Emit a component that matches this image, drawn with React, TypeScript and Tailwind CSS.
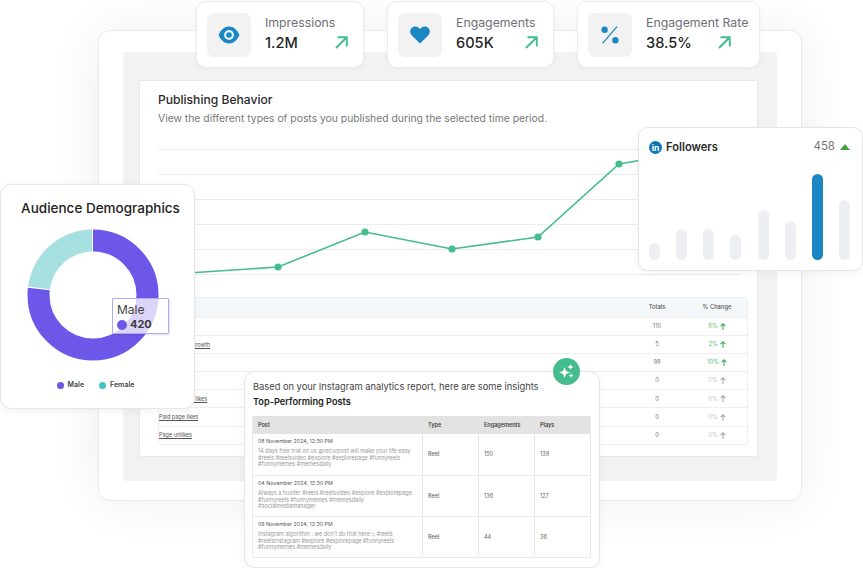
const font = "font-['Inter','Noto_Sans',sans-serif]";

const rows = [
  { name: "Page likes", total: "110", change: "8%", up: true },
  { name: "Net follower growth", total: "5", change: "2%", up: true },
  { name: "Page views", total: "98", change: "10%", up: true },
  { name: "Page reach", total: "0", change: "0%", up: false },
  { name: "Organic page likes", total: "0", change: "0%", up: false },
  { name: "Paid page likes", total: "0", change: "0%", up: false },
  { name: "Page unlikes", total: "0", change: "0%", up: false },
];

const posts = [
  {
    date: "08 November 2024, 12:30 PM",
    text: "14 days free trial on us @recurpost will make your life easy #reels #reelsvideo #explore #explorepage #funnyreels #funnymemes #memesdaily",
    eng: "150",
    plays: "139",
  },
  {
    date: "04 November 2024, 12:30 PM",
    text: "Always a hustler #reels #reelsvideo #explore #explorepage #funnyreels #funnymemes #memesdaily #socialmediamanager",
    eng: "136",
    plays: "127",
  },
  {
    date: "09 November 2024, 12:30 PM",
    text: "Instagram algorithm : we don't do that here :) #reels #reelsinstagram #explore #explorepage #funnyreels #funnymemes #memesdaily",
    eng: "44",
    plays: "36",
  },
];

const bars = [17, 31, 31, 25, 50, 39, 86, 60];

const TrendArrow = () => (
  <svg width="13" height="13" viewBox="0 0 13 13" fill="none" stroke="#43bd8c" strokeWidth="1.9">
    <path d="M1 12 L11.5 1.5 M2.5 1.3 H11.8 V10.5" />
  </svg>
);

const SmallUp = ({ color }: { color: string }) => (
  <svg width="6" height="7" viewBox="0 0 6 7" fill="none" stroke={color} strokeWidth="1.1">
    <path d="M3 7 V1 M.6 3.2 L3 .8 L5.4 3.2" />
  </svg>
);

const EyeIcon = () => (
  <svg width="22" height="18" viewBox="0 0 22 18">
    <path d="M.5 9 C3 3.5 6.5 .5 11 .5 C15.5 .5 19 3.5 21.5 9 C19 14.5 15.5 17.5 11 17.5 C6.5 17.5 3 14.5 .5 9 Z" fill="#1a87c2" />
    <circle cx="11" cy="9" r="4.9" fill="#e6f2f8" />
    <circle cx="11" cy="9" r="2.8" fill="#1a87c2" />
  </svg>
);

const HeartIcon = () => (
  <svg width="20" height="18" viewBox="0 0 20 18">
    <path
      d="M10 17.5 L1.8 9.4 C-.4 7.2 -.3 3.6 1.9 1.7 C4.1 -.2 7.6 .2 10 3 C12.4 .2 15.9 -.2 18.1 1.7 C20.3 3.6 20.4 7.2 18.2 9.4 Z"
      fill="#1a87c2"
    />
  </svg>
);

const PercentIcon = () => (
  <svg width="18" height="18" viewBox="0 0 18 18" fill="#1a87c2">
    <circle cx="3.6" cy="3.8" r="3.2" />
    <circle cx="14.4" cy="14.2" r="3.2" />
    <path d="M16 .6 L1.6 17.4" stroke="#1a87c2" strokeWidth="1.3" />
  </svg>
);

const StatCard = ({
  label,
  value,
  icon,
  width,
  arrowGap,
}: {
  label: string;
  value: string;
  icon: React.ReactNode;
  width: string;
  arrowGap: string;
}) => (
  <div className={`${width} h-[67px] bg-white rounded-[10px] border border-[#ececec] flex items-center pl-[10px] gap-[14px] shadow-[0_1px_4px_rgba(0,0,0,0.04)]`}>
    <div className="w-[44px] h-[44px] rounded-[7px] bg-[#f2f2f2] flex items-center justify-center">{icon}</div>
    <div className="flex flex-col gap-[2px] mb-[2px]">
      <span className="text-[12.3px] leading-[16px] text-[#6e6e78]">{label}</span>
      <div className={`flex items-center ${arrowGap}`}>
        <span className="text-[14.6px] leading-[20px] font-medium text-[#262626]">{value}</span>
        <TrendArrow />
      </div>
    </div>
  </div>
);

const PublishingPanel = () => (
  <div className="h-[377px] bg-white border border-[#e9e9e9] rounded-[2px] pl-[18px] pr-[10px] pt-[11px] flex flex-col">
    <h2 className="text-[12.1px] leading-[16px] font-medium text-[#2a2a2a]">Publishing Behavior</h2>
    <p className="mt-[2px] text-[10.35px] leading-[16px] text-[#777]">
      View the different types of posts you published during the selected time period.
    </p>
    <svg className="mt-[23px] shrink-0" width="590" height="126" viewBox="0 0 590 126" fill="none">
      {[0, 25, 50, 75, 100, 125].map((y) => (
        <line key={y} x1="0" x2="583" y1={y + 0.5} y2={y + 0.5} stroke="#ececec" />
      ))}
      <polyline
        points="30,124 120,118 207,83 294,100 380,88 461,15 520,5"
        stroke="#43bd8c"
        strokeWidth="1.6"
      />
      {[[120, 118], [207, 83], [294, 100], [380, 88], [461, 15]].map(([cx, cy]) => (
        <circle key={cx} cx={cx} cy={cy} r="3.6" fill="#43bd8c" />
      ))}
    </svg>
    <div className="mt-[22px] w-[590px] border border-[#efefef] rounded-[3px] overflow-hidden">
      <div className="h-[19px] bg-[#f5f8fb] flex items-center text-[5.8px] font-medium text-[#555]">
        <span className="flex-1" />
        <span className="w-[60px] text-center">Totals</span>
        <span className="w-[60px] text-center">% Change</span>
      </div>
      {rows.map((row) => (
        <div key={row.name} className="h-[18.1px] border-t border-[#efefef] flex items-center text-[5.8px] text-[#777]">
          <span className="flex-1 underline text-[5.5px] text-[#555]">{row.name}</span>
          <span className="w-[60px] text-center">{row.total}</span>
          <span className={`w-[60px] flex items-center justify-center gap-[2px] ${row.up ? "text-[#54c66b]" : "text-[#c4c4c4]"}`}>
            {row.change}
            <SmallUp color={row.up ? "#3fae5a" : "#aaa"} />
          </span>
        </div>
      ))}
    </div>
  </div>
);

const FollowersCard = () => (
  <div className="absolute left-[638px] top-[127px] w-[225px] h-[144px] bg-white border border-[#e6e6e6] rounded-[10px] px-[10px] pt-[11px] flex flex-col shadow-[0_2px_8px_rgba(0,0,0,0.05)]">
    <div className="flex items-center h-[16px]">
      <svg width="13" height="13" viewBox="0 0 13 13">
        <circle cx="6.5" cy="6.5" r="6.5" fill="#0f76b5" />
        <text x="6.5" y="9.8" textAnchor="middle" fontSize="8.5" fontWeight="700" fill="#fff">in</text>
      </svg>
      <span className="ml-[4px] text-[11.2px] font-semibold text-[#2a2a2a]">Followers</span>
      <span className="ml-auto text-[11.5px] text-[#777]">458</span>
      <span className="ml-[5px] mr-[2px] w-0 h-0 border-x-[5px] border-x-transparent border-b-[6px] border-b-[#43a047]" />
    </div>
    <div className="mt-[19px] h-[86px] flex items-end justify-between pr-[2px]">
      {bars.map((h, i) => (
        <div
          key={i}
          className={`w-[11px] rounded-full ${i === 6 ? "bg-[#1a87c2]" : "bg-[#eeeff2]"}`}
          style={{ height: h }}
        />
      ))}
    </div>
  </div>
);

const DemographicsCard = () => (
  <div className="absolute left-0 top-[184px] w-[195px] h-[225px] bg-white border border-[#e6e6e6] rounded-[11px] flex flex-col items-center shadow-[0_2px_8px_rgba(0,0,0,0.05)]">
    <h3 className="mt-[13px] ml-[6px] text-[13.5px] leading-[20px] font-medium text-[#222]">Audience Demographics</h3>
    <svg className="mt-[10px] mr-[9px]" width="134" height="134" viewBox="0 0 134 134" fill="none">
      <circle cx="67" cy="67" r="54.5" stroke="#6c57e8" strokeWidth="22" pathLength="360" strokeDasharray="276.5 83.5" transform="rotate(-90 67 67)" />
      <circle cx="67" cy="67" r="54.5" stroke="#a6e0e0" strokeWidth="22" pathLength="360" strokeDasharray="81.5 278.5" transform="rotate(187.5 67 67)" />
    </svg>
    <div className="mt-[18px] mr-[4px] flex items-center gap-[15px] text-[7px] font-semibold text-[#444]">
      <span className="flex items-center gap-[4px]">
        <span className="w-[7px] h-[7px] rounded-full bg-[#6c57e8]" />
        Male
      </span>
      <span className="flex items-center gap-[4px]">
        <span className="w-[7px] h-[7px] rounded-full bg-[#3fc4c0]" />
        Female
      </span>
    </div>
    <div className="absolute left-[111px] top-[113px] w-[57px] h-[36px] bg-white/75 border border-[#b3a8f2] rounded-[1px] pl-[4px] pt-[3px] shadow-[1px_1px_2px_rgba(0,0,0,0.12)]">
      <div className="text-[12px] leading-[15px] text-[#444]">Male</div>
      <div className="flex items-center gap-[3px] text-[11px] leading-[15px] font-bold text-[#3a3a3a]">
        <span className="w-[10px] h-[10px] rounded-full bg-[#6c57e8]" />
        420
      </div>
    </div>
  </div>
);

const InsightsCard = () => (
  <div className="absolute left-[244px] top-[371px] w-[356px] h-[197px] bg-white border border-[#e6e6e6] rounded-[11px] pl-[8px] pr-[8px] pt-[8px] shadow-[0_2px_8px_rgba(0,0,0,0.05)]">
    <p className="text-[9.3px] leading-[14px] text-[#444]">
      Based on your Instagram analytics report, here are some insights
    </p>
    <h3 className="text-[9.2px] leading-[15px] font-semibold text-[#222]">Top-Performing Posts</h3>
    <div className="mt-[7px] ml-[-1px] w-[339px] border-x border-b border-[#eaeaea]">
      <div className="grid grid-cols-[170px_56px_56px_1fr] h-[18px] bg-[#e3e3e3] items-center text-[5.5px] font-semibold text-[#444]">
        <span className="pl-[5px]">Post</span>
        <span className="pl-[5px]">Type</span>
        <span className="pl-[5px]">Engagements</span>
        <span className="pl-[5px]">Plays</span>
      </div>
      {posts.map((post, i) => (
        <div key={post.date} className={`grid grid-cols-[170px_56px_56px_1fr] h-[41px] text-[5.5px] text-[#666] ${i > 0 ? "border-t border-[#eaeaea]" : ""}`}>
          <div className="pl-[5px] pr-[6px] pt-[3px] border-r border-[#eaeaea]">
            <div className="text-[5.3px] leading-[8px] text-[#555]">{post.date}</div>
            <div className="mt-[3px] leading-[6.5px] text-[#999]">{post.text}</div>
          </div>
          <div className="pl-[5px] flex items-center font-medium border-r border-[#eaeaea]">Reel</div>
          <div className="pl-[5px] flex items-center border-r border-[#eaeaea]">{post.eng}</div>
          <div className="pl-[5px] flex items-center">{post.plays}</div>
        </div>
      ))}
    </div>
    <div className="absolute left-[308px] top-[-14px] w-[27px] h-[27px] rounded-full bg-[#43bd8c] flex items-center justify-center">
      <svg width="15" height="15" viewBox="0 0 15 15" fill="#fff">
        <path d="M5.5 3 L7 7 L11 8.5 L7 10 L5.5 14 L4 10 L0 8.5 L4 7 Z" />
        <path d="M11.5 0 L12.4 2.1 L14.5 3 L12.4 3.9 L11.5 6 L10.6 3.9 L8.5 3 L10.6 2.1 Z" />
        <path d="M12 9 L12.7 10.8 L14.5 11.5 L12.7 12.2 L12 14 L11.3 12.2 L9.5 11.5 L11.3 10.8 Z" />
      </svg>
    </div>
  </div>
);

export default function App() {
  return (
    <div className={`${font} relative w-[863px] h-[568px] bg-white overflow-hidden`}>
      <div className="pl-[98px] pt-[30px]">
        <div className="w-[704px] h-[471px] bg-white border border-[#eaeaea] rounded-[12px] pl-[24px] pr-[24px] pt-[21px] shadow-[0_0_50px_rgba(0,0,0,0.07)]">
          <div className="h-[429px] bg-[#f2f2f2] rounded-[3px] pl-[16px] pr-[19px] pt-[28px]">
            <PublishingPanel />
          </div>
        </div>
      </div>

      <div className="absolute left-[196px] top-[1px] flex gap-[23px]">
        <StatCard label="Impressions" value="1.2M" icon={<EyeIcon />} width="w-[168px]" arrowGap="gap-[37px]" />
        <StatCard label="Engagements" value="605K" icon={<HeartIcon />} width="w-[167px]" arrowGap="gap-[31px]" />
        <StatCard label="Engagement Rate" value="38.5%" icon={<PercentIcon />} width="w-[183px]" arrowGap="gap-[26px]" />
      </div>

      <FollowersCard />
      <DemographicsCard />
      <InsightsCard />
    </div>
  );
}
